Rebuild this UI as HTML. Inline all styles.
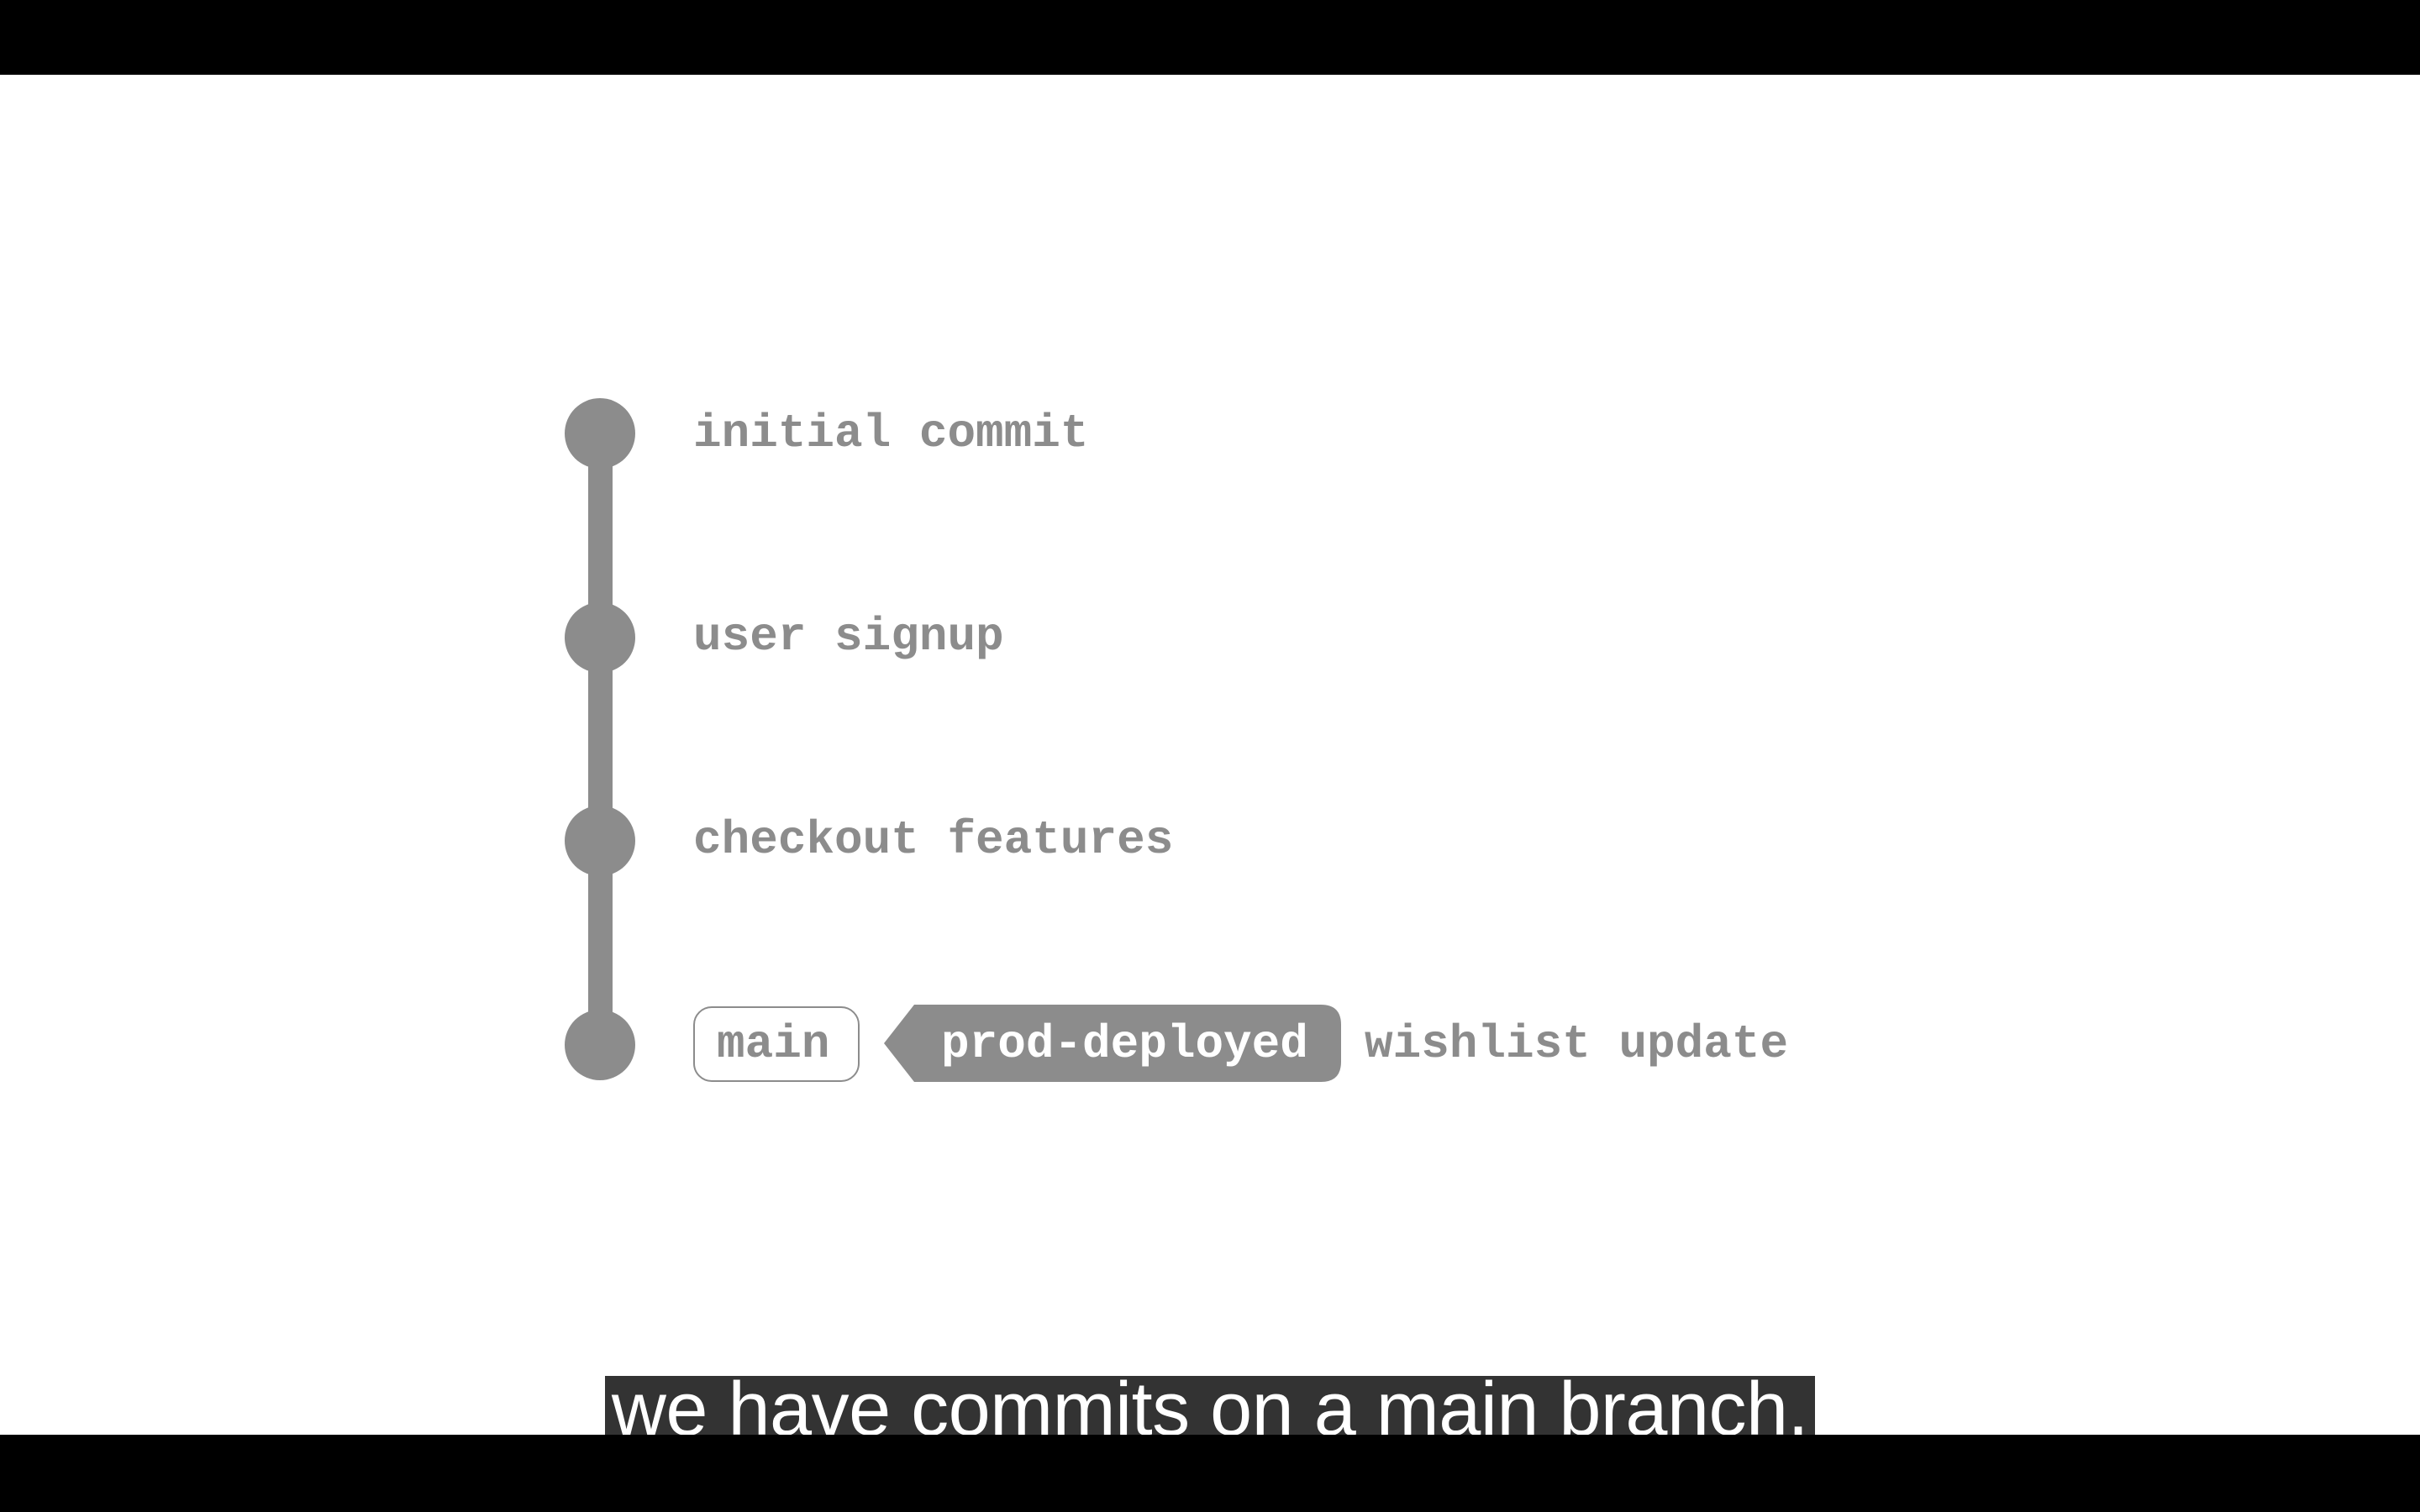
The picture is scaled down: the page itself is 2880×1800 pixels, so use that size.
<!DOCTYPE html>
<html><head><style>
body{margin:0;width:2880px;height:1800px;background:#fff;position:relative;overflow:hidden;font-family:"Liberation Mono",monospace;}
.bar{position:absolute;left:0;width:2880px;background:#000;}
.dot{position:absolute;left:672px;width:84px;height:84px;border-radius:50%;background:#8c8c8c;}
.t{position:absolute;font-weight:bold;font-size:56px;color:#8c8c8c;line-height:1;}
</style></head><body>
<div class="bar" style="top:0;height:89px"></div>
<div class="bar" style="top:1708px;height:92px"></div>
<div style="position:absolute;left:700px;top:514px;width:29px;height:728px;background:#8c8c8c"></div>
<div class="dot" style="top:474px"></div>
<div class="dot" style="top:717px"></div>
<div class="dot" style="top:959px"></div>
<div class="dot" style="top:1202px"></div>
<div class="t" style="left:825px;top:488px">initial commit</div>
<div class="t" style="left:825px;top:730px">user signup</div>
<div class="t" style="left:825px;top:972px">checkout features</div>
<div style="position:absolute;left:825px;top:1198px;width:198px;height:90px;border:2px solid #8c8c8c;border-radius:22px;box-sizing:border-box"></div>
<div class="t" style="left:853px;top:1215px">main</div>
<svg style="position:absolute;left:1052px;top:1196px" width="544" height="92"><path d="M0 46 L36 0 H520 Q544 0 544 24 V68 Q544 92 520 92 H36 Z" fill="#8c8c8c"/></svg>
<div class="t" style="left:1120px;top:1215px;color:#fff">prod-deployed</div>
<div class="t" style="left:1624px;top:1215px">wishlist update</div>
<div style="position:absolute;left:720px;top:1638px;width:1440px;height:70px;background:#333;overflow:hidden;color:#fff;font-family:'Liberation Sans',sans-serif;font-size:90px;line-height:80px;text-align:center;white-space:nowrap;letter-spacing:-0.5px">we have commits on a main branch.</div>
</body></html>
